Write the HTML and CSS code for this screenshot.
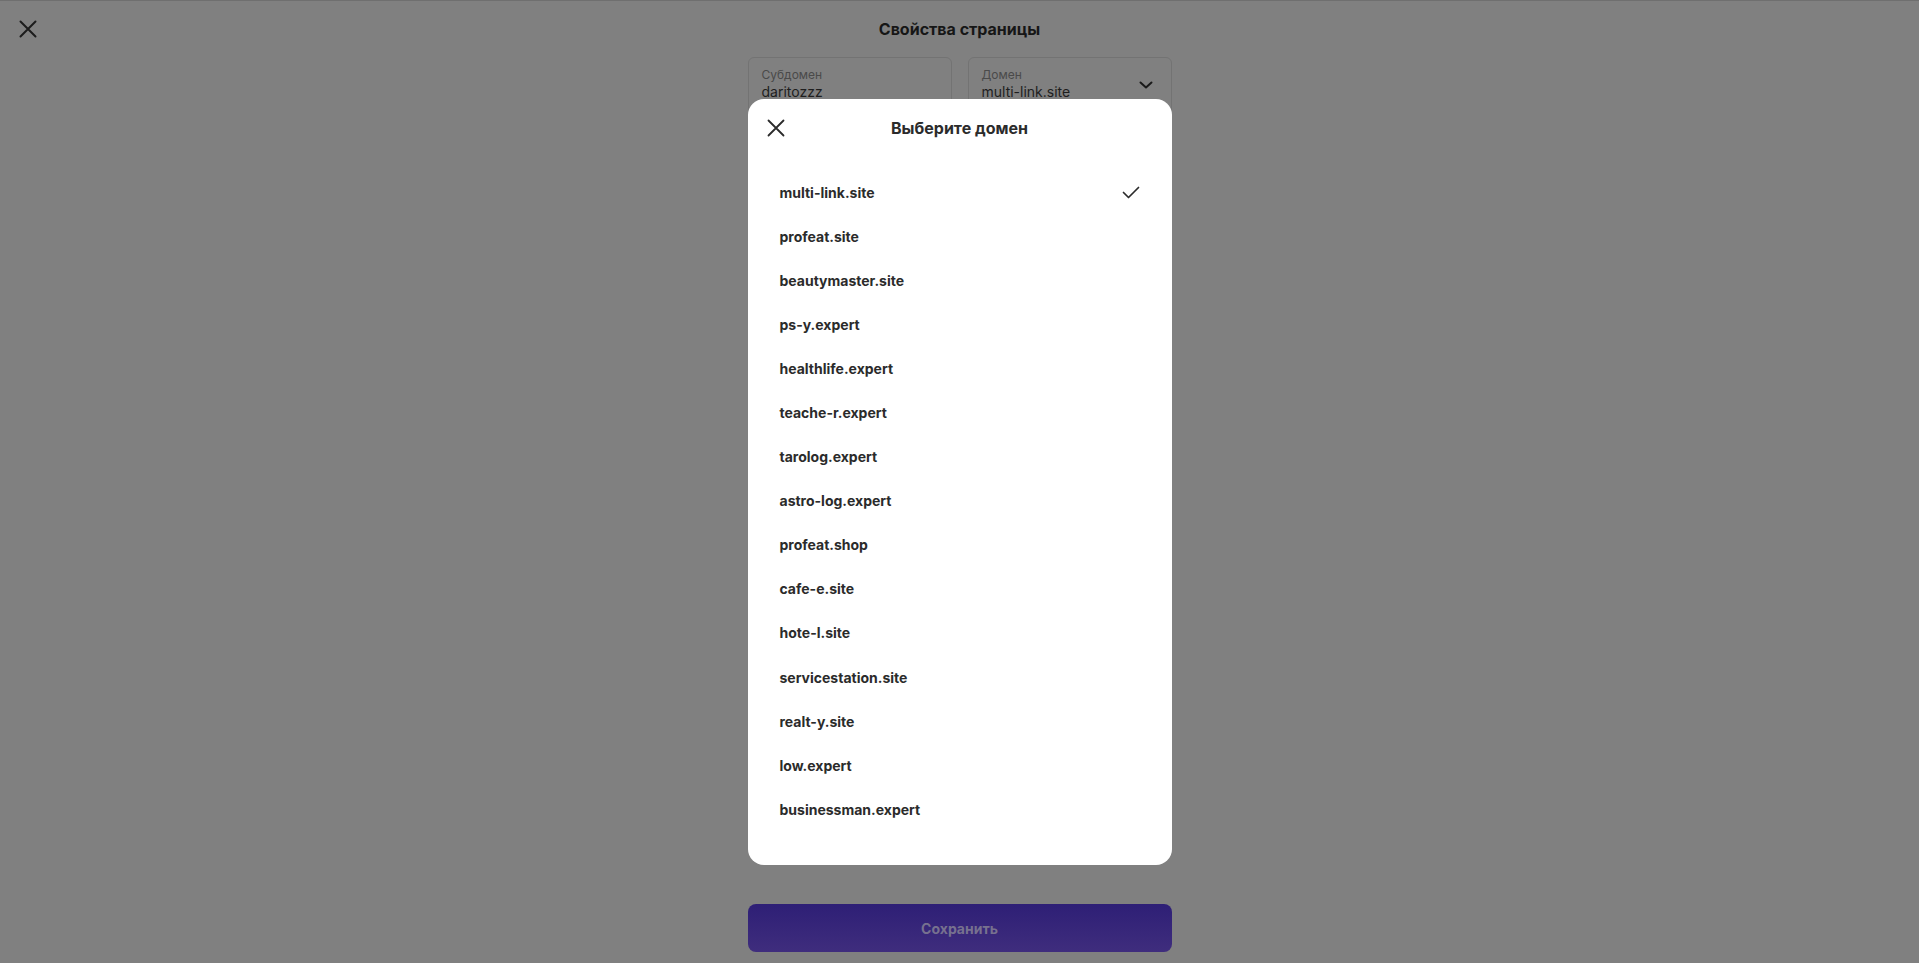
FILE: index.html
```html
<!DOCTYPE html>
<html lang="ru">
<head>
    <meta charset="UTF-8">
    <meta name="viewport" content="width=device-width, initial-scale=1.0">
    <title>Свойства страницы</title>
    <link rel="stylesheet" href="styles.css">
</head>
<body>
    <div class="page">
        <header class="topbar">
            <button class="icon-btn" type="button" aria-label="Закрыть">
                <svg width="24" height="24" viewBox="0 0 24 24"><path d="M4.5 4.5L19.5 19.5M19.5 4.5L4.5 19.5" stroke="#1c1c1c" stroke-width="2" stroke-linecap="round"/></svg>
            </button>
            <h1>Свойства страницы</h1>
            <span></span>
        </header>

        <form class="form">
            <div class="fields">
                <label class="field">
                    <span class="field-label">Субдомен</span>
                    <span class="field-value">daritozzz</span>
                </label>
                <label class="field field-select">
                    <span class="field-label">Домен</span>
                    <span class="field-value">multi-link.site</span>
                    <svg class="chevron" width="16" height="16" viewBox="0 0 16 16"><path d="M2.5 5.5L8 10.5L13.5 5.5" fill="none" stroke="#1a1a1a" stroke-width="2" stroke-linecap="round" stroke-linejoin="round"/></svg>
                </label>
            </div>
            <button class="save" type="submit">Сохранить</button>
        </form>
    </div>

    <div class="backdrop">
        <div class="modal">
            <div class="modal-head">
                <button class="icon-btn" type="button" aria-label="Закрыть">
                    <svg width="24" height="24" viewBox="0 0 24 24"><path d="M4.5 4.5L19.5 19.5M19.5 4.5L4.5 19.5" stroke="#2b2b2b" stroke-width="1.8" stroke-linecap="round"/></svg>
                </button>
                <h2>Выберите домен</h2>
                <span></span>
            </div>
            <ul class="domains">
                <li class="selected">multi-link.site
                    <svg width="20" height="20" viewBox="0 0 20 20"><path d="M2.5 10.5L7.5 15.5L17.5 5.5" fill="none" stroke="#2b2b2b" stroke-width="1.7" stroke-linecap="round" stroke-linejoin="round"/></svg>
                </li>
                <li>profeat.site</li>
                <li>beautymaster.site</li>
                <li>ps-y.expert</li>
                <li>healthlife.expert</li>
                <li>teache-r.expert</li>
                <li>tarolog.expert</li>
                <li>astro-log.expert</li>
                <li>profeat.shop</li>
                <li>cafe-e.site</li>
                <li>hote-l.site</li>
                <li>servicestation.site</li>
                <li>realt-y.site</li>
                <li>low.expert</li>
                <li>businessman.expert</li>
            </ul>
        </div>
    </div>
</body>
</html>
```

FILE: styles.css
```css
html, body {
    margin: 0;
    padding: 0;
    height: 100%;
}
body {
    font-family: Inter, "Noto Sans", Arial, sans-serif;
    background: #808080;
    color: #1c1c1c;
    overflow: hidden;
}
.page {
    box-sizing: border-box;
    height: 100vh;
    border-top: 1px solid #6f6f6f;
    display: flex;
    flex-direction: column;
    padding-bottom: 11px;
}
.topbar {
    display: grid;
    grid-template-columns: 1fr auto 1fr;
    align-items: center;
    height: 56px;
    padding: 0 16px;
}
.topbar h1 {
    margin: 0;
    font-size: 16px;
    font-weight: 700;
    line-height: 20px;
    color: #161616;
}
.icon-btn {
    width: 24px;
    height: 24px;
    padding: 0;
    border: none;
    background: none;
    cursor: pointer;
    display: flex;
}
.form {
    flex: 1;
    width: 424px;
    margin: 0 auto;
    display: flex;
    flex-direction: column;
}
.fields {
    display: grid;
    grid-template-columns: 1fr 1fr;
    gap: 16px;
}
.field {
    position: relative;
    display: flex;
    flex-direction: column;
    height: 58px;
    box-sizing: border-box;
    padding: 9px 13px;
    border: 1px solid #737373;
    border-radius: 6px;
}
.field-label {
    font-size: 12px;
    line-height: 16px;
    color: #4a4a4a;
}
.field-value {
    font-size: 14px;
    line-height: 18px;
    color: #1e1e1e;
}
.chevron {
    position: absolute;
    right: 17px;
    top: 19px;
}
.save {
    margin-top: auto;
    height: 48px;
    border: none;
    border-radius: 8px;
    background: linear-gradient(180deg, #2e1f76 0%, #3f2d7d 100%);
    color: #77718f;
    font-family: inherit;
    font-size: 14px;
    font-weight: 700;
    cursor: pointer;
}
.backdrop {
    position: fixed;
    inset: 0;
    display: flex;
    justify-content: center;
    align-items: flex-start;
    padding-top: 99px;
}
.modal {
    width: 424px;
    background: #fff;
    border-radius: 16px;
    padding-bottom: 34px;
    color: #2b2b2b;
}
.modal-head {
    display: grid;
    grid-template-columns: 1fr auto 1fr;
    align-items: center;
    height: 58px;
    padding: 0 16px;
}
.modal-head h2 {
    margin: 0;
    font-size: 16px;
    font-weight: 700;
    line-height: 20px;
}
.domains {
    list-style: none;
    margin: 0;
    padding: 13px 0 0;
}
.domains li {
    display: flex;
    align-items: center;
    justify-content: space-between;
    height: 44.1px;
    padding: 0 31px 0 32px;
    font-size: 14px;
    font-weight: 700;
    cursor: pointer;
}
```
